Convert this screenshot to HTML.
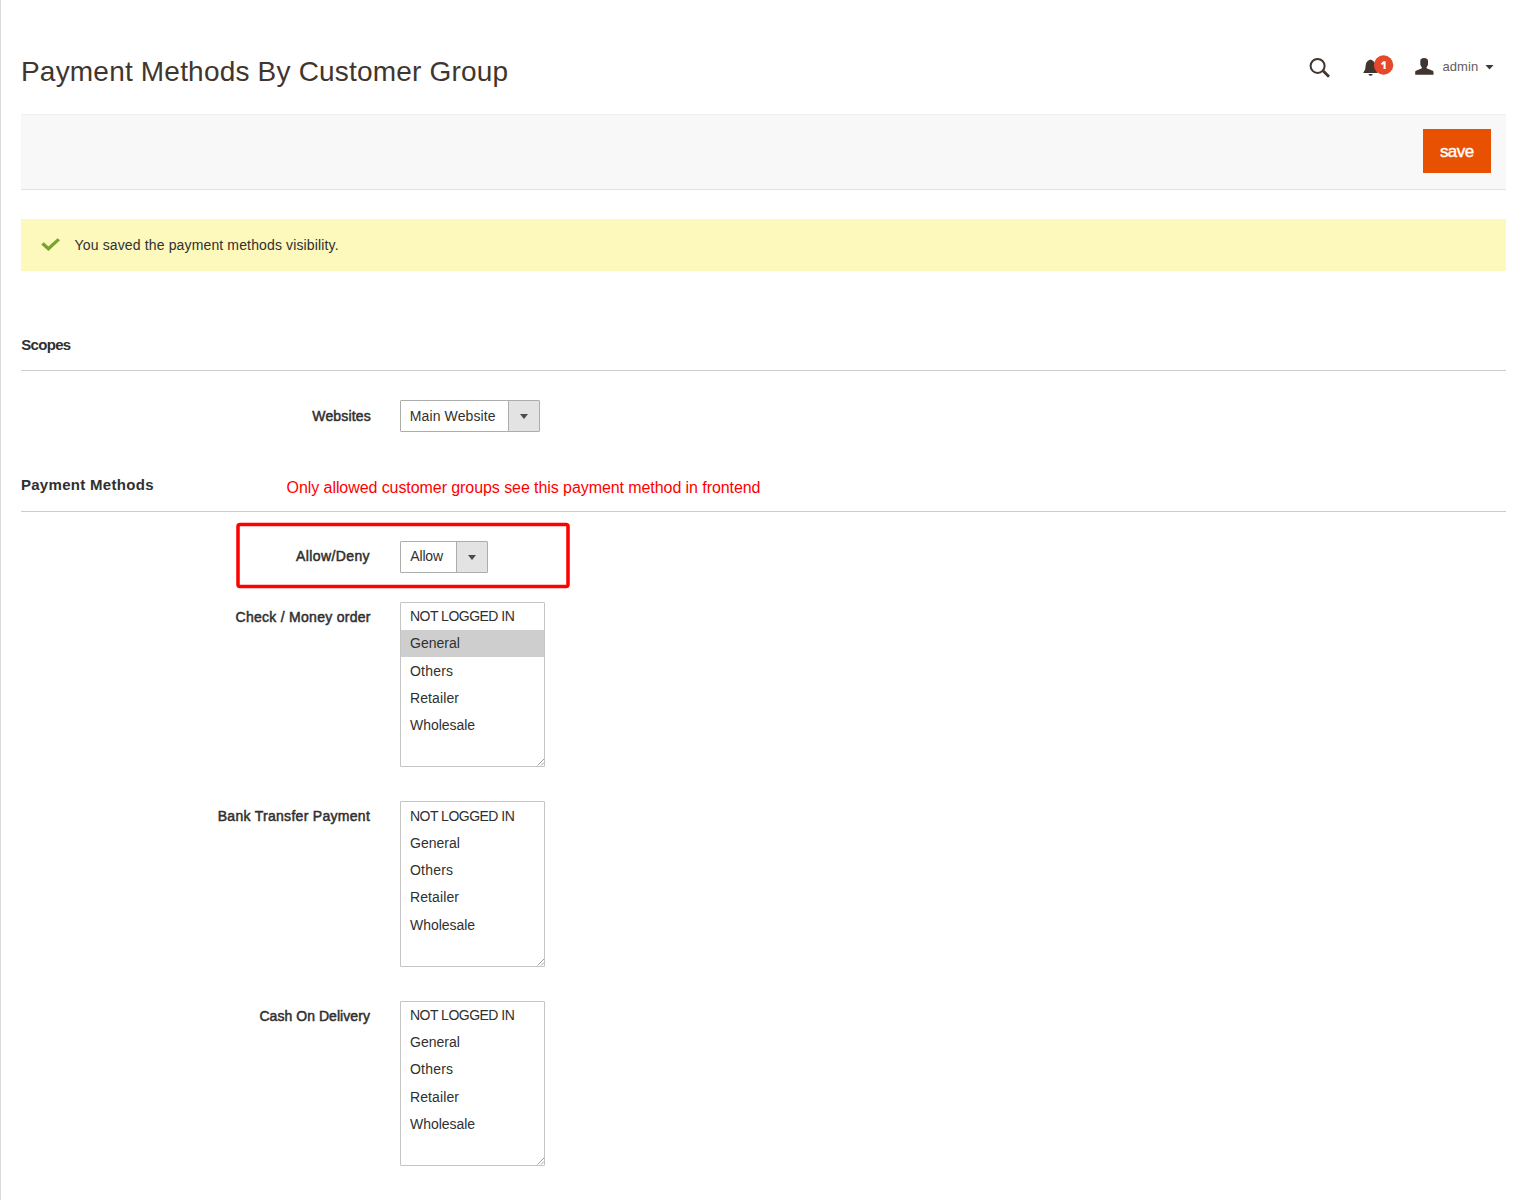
<!DOCTYPE html>
<html><head><meta charset="utf-8">
<style>
html,body{margin:0;padding:0;background:#fff;width:1525px;height:1200px;overflow:hidden;position:relative;font-family:"Liberation Sans",sans-serif;}
.a{position:absolute;white-space:nowrap;}
.leftline{left:0;top:0;width:1px;height:1200px;background:#d9d9d9;}
.bar{left:21px;top:114px;width:1485px;height:74px;background:#f8f8f8;border-top:1px solid #eeeeee;border-bottom:1px solid #e3e3e3;}
.save{left:1423px;top:129px;width:68px;height:44px;background:#e85002;}
.msg{left:21px;top:219px;width:1485px;height:52px;background:#fdf8bb;}
.hr{left:21px;width:1485px;height:1px;background:#cccccc;}
.sel{border:1px solid #adadad;background:#fff;box-sizing:border-box;border-radius:1px;}
.selbtn{position:absolute;top:0;right:0;height:30px;background:#e3e3e3;border-left:1px solid #adadad;}
.ms{left:400px;width:145px;height:165px;border:1px solid #c4c4c4;box-sizing:border-box;background:#fff;border-radius:1px;}
.hl{left:401px;width:143px;height:26.5px;background:#cecece;}
.ic{fill:#41362f;}
</style></head><body>
<div class="a leftline"></div>
<div class="a" style="left:21.0px;top:58px;font-size:28px;line-height:28px;color:#41362f;letter-spacing:0.197px;">Payment Methods By Customer Group</div>

<svg class="a" style="left:0;top:0" width="1525" height="100" viewBox="0 0 1525 100">
  <circle cx="1317.6" cy="65.9" r="7" fill="none" stroke="#41362f" stroke-width="2"/>
  <path d="M1323 70.8 L1329 76.8" stroke="#41362f" stroke-width="2.8" stroke-linecap="butt"/>
  <path class="ic" d="M1370.5 59.6 C1372 60.1 1374 61.3 1374.9 63.2 C1375.3 64.5 1375.5 67 1375.7 68.4 C1376 70 1377 71.2 1377.8 72.9 L1363.2 72.9 C1364 71.2 1365 70 1365.3 68.4 C1365.5 67 1365.7 64.5 1366.1 63.2 C1367 61.3 1369 60.1 1370.5 59.6 Z"/>
  <path class="ic" d="M1368.4 73.9 C1369 76.3 1372.2 76.3 1372.8 73.9 Z"/>
  <circle cx="1383.6" cy="65" r="9.7" fill="#e3492a"/>
  <path class="ic" d="M1420.3 61 C1420.3 58.8 1422 58.1 1424.15 58.1 C1426.3 58.1 1428 58.8 1428 61 L1428 64.5 C1427.6 66 1426.6 67 1426.4 68 C1428 69.5 1432.6 70 1433.5 71.5 L1433.5 74.8 L1415.2 74.8 L1415.2 71.5 C1416 70 1420.6 69.5 1422 68 C1421.8 67 1420.8 66 1420.3 64.5 Z"/>
  <path class="ic" d="M1485.5 65 L1493.5 65 L1489.5 69.5 Z"/>
</svg>
<svg class="a" style="left:1370px;top:50px" width="30" height="30" viewBox="1370 50 30 30"><path d="M1383.2 61.3 L1385.6 61.3 L1385.6 68.9 L1383.5 68.9 L1383.5 63.9 L1381.9 65.1 L1381 63.5 Z" fill="#fff"/></svg>
<div class="a" style="left:1442.4px;top:60px;font-size:13px;line-height:13px;color:#675d56;letter-spacing:0.1px;">admin</div>

<div class="a bar"></div>
<div class="a save"></div>
<div class="a" style="left:1439.9px;top:143px;font-size:17px;line-height:17px;color:#ffffff;letter-spacing:-0.533px;-webkit-text-stroke:0.4px #fff;">save</div>

<div class="a msg"></div>
<svg class="a" style="left:30px;top:230px" width="40" height="30" viewBox="30 230 40 30"><path d="M41.2 244.4 L43.8 242.2 L48.4 246.6 L57.6 238.2 L60 240.3 L48.4 251 Z" fill="#79a22e"/></svg>
<div class="a" style="left:74.6px;top:238px;font-size:14px;line-height:14px;color:#303030;letter-spacing:0.14px;">You saved the payment methods visibility.</div>

<div class="a" style="left:21.2px;top:337px;font-size:15px;line-height:15px;color:#303030;letter-spacing:-0.68px;font-weight:bold;">Scopes</div>
<div class="a hr" style="top:370px;"></div>

<div class="a" style="left:312.3px;top:409px;font-size:14px;line-height:14px;color:#303030;letter-spacing:0.157px;-webkit-text-stroke:0.5px currentColor;">Websites</div>
<div class="a sel" style="left:400px;top:400px;width:140px;height:32px;"><div class="selbtn" style="width:30px;"></div></div>
<div class="a" style="left:409.8px;top:409px;font-size:14px;line-height:14px;color:#303030;letter-spacing:0.109px;">Main Website</div>

<div class="a" style="left:20.9px;top:477px;font-size:15px;line-height:15px;color:#303030;letter-spacing:0.307px;font-weight:bold;">Payment Methods</div>
<div class="a" style="left:286.6px;top:480px;font-size:16px;line-height:16px;color:#ff0000;letter-spacing:-0.073px;">Only allowed customer groups see this payment method in frontend</div>
<div class="a hr" style="top:511px;"></div>

<div class="a" style="left:295.9px;top:549px;font-size:14px;line-height:14px;color:#303030;letter-spacing:0.411px;-webkit-text-stroke:0.5px currentColor;">Allow/Deny</div>
<div class="a sel" style="left:400px;top:541px;width:88px;height:32px;"><div class="selbtn" style="width:30px;"></div></div>
<div class="a" style="left:410.2px;top:549px;font-size:14px;line-height:14px;color:#303030;letter-spacing:-0.125px;">Allow</div>
<svg class="a" style="left:0;top:380px" width="600" height="220" viewBox="0 380 600 220">
  <path d="M520 414 L528 414 L524 419 Z" fill="#514943"/>
  <path d="M468 555 L476 555 L472 560 Z" fill="#514943"/>
  <rect x="238" y="524.5" width="330" height="62" rx="2" fill="none" stroke="#ff0000" stroke-width="3.5"/>
</svg>

<div class="a" style="left:235.6px;top:610px;font-size:14px;line-height:14px;color:#303030;letter-spacing:0.272px;-webkit-text-stroke:0.5px currentColor;">Check / Money order</div>
<div class="a ms" style="top:602px;height:165px;"></div>
<div class="a" style="left:410px;top:609px;font-size:14px;line-height:14px;color:#303030;letter-spacing:-0.517px;">NOT LOGGED IN</div>
<div class="a hl" style="top:630.00px;"></div>
<div class="a" style="left:410px;top:636px;font-size:14px;line-height:14px;color:#303030;letter-spacing:0.017px;">General</div>
<div class="a" style="left:410px;top:664px;font-size:14px;line-height:14px;color:#303030;letter-spacing:0.22px;">Others</div>
<div class="a" style="left:410px;top:691px;font-size:14px;line-height:14px;color:#303030;letter-spacing:0.1px;">Retailer</div>
<div class="a" style="left:410px;top:718px;font-size:14px;line-height:14px;color:#303030;letter-spacing:-0.038px;">Wholesale</div>
<svg class="a" style="left:534px;top:756px;" width="12" height="12" viewBox="0 0 12 12"><path d="M10 3 L3.5 9.5 M10 6.5 L7 9.5" stroke="#a0a0a0" stroke-width="1" fill="none"/></svg>

<div class="a" style="left:217.7px;top:809px;font-size:14px;line-height:14px;color:#303030;letter-spacing:0.29px;-webkit-text-stroke:0.5px currentColor;">Bank Transfer Payment</div>
<div class="a ms" style="top:801px;height:166px;"></div>
<div class="a" style="left:410px;top:809px;font-size:14px;line-height:14px;color:#303030;letter-spacing:-0.517px;">NOT LOGGED IN</div>
<div class="a" style="left:410px;top:836px;font-size:14px;line-height:14px;color:#303030;letter-spacing:0.017px;">General</div>
<div class="a" style="left:410px;top:863px;font-size:14px;line-height:14px;color:#303030;letter-spacing:0.22px;">Others</div>
<div class="a" style="left:410px;top:890px;font-size:14px;line-height:14px;color:#303030;letter-spacing:0.1px;">Retailer</div>
<div class="a" style="left:410px;top:918px;font-size:14px;line-height:14px;color:#303030;letter-spacing:-0.038px;">Wholesale</div>
<svg class="a" style="left:534px;top:956px;" width="12" height="12" viewBox="0 0 12 12"><path d="M10 3 L3.5 9.5 M10 6.5 L7 9.5" stroke="#a0a0a0" stroke-width="1" fill="none"/></svg>

<div class="a" style="left:259.4px;top:1009px;font-size:14px;line-height:14px;color:#303030;letter-spacing:0.053px;-webkit-text-stroke:0.5px currentColor;">Cash On Delivery</div>
<div class="a ms" style="top:1001px;height:165px;"></div>
<div class="a" style="left:410px;top:1008px;font-size:14px;line-height:14px;color:#303030;letter-spacing:-0.517px;">NOT LOGGED IN</div>
<div class="a" style="left:410px;top:1035px;font-size:14px;line-height:14px;color:#303030;letter-spacing:0.017px;">General</div>
<div class="a" style="left:410px;top:1062px;font-size:14px;line-height:14px;color:#303030;letter-spacing:0.22px;">Others</div>
<div class="a" style="left:410px;top:1090px;font-size:14px;line-height:14px;color:#303030;letter-spacing:0.1px;">Retailer</div>
<div class="a" style="left:410px;top:1117px;font-size:14px;line-height:14px;color:#303030;letter-spacing:-0.038px;">Wholesale</div>
<svg class="a" style="left:534px;top:1155px;" width="12" height="12" viewBox="0 0 12 12"><path d="M10 3 L3.5 9.5 M10 6.5 L7 9.5" stroke="#a0a0a0" stroke-width="1" fill="none"/></svg>

</body></html>
